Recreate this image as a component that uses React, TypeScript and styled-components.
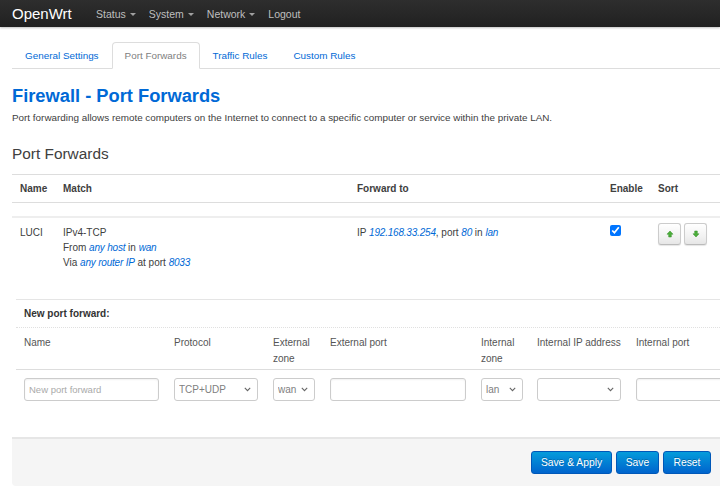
import React from "react";
import styled, { createGlobalStyle } from "styled-components";

const Global = createGlobalStyle`
  html, body { margin: 0; padding: 0; background: #fff; }
  body {
    font-family: "Liberation Sans", Arial, sans-serif;
    font-size: 10px;
    color: #404040;
    overflow: hidden;
    width: 720px;
    height: 497px;
  }
  * { box-sizing: border-box; }
`;

const Navbar = styled.div`
  height: 27px;
  background: linear-gradient(#2e2e2e, #262626 60%, #202020);
  box-shadow: 0 1px 2px rgba(0, 0, 0, 0.25);
  display: flex;
  align-items: center;
  padding-left: 12px;
`;

const Brand = styled.a`
  color: #fff;
  font-size: 15px;
  width: 84px;
  line-height: 27px;
`;

const Menu = styled.div`
  display: flex;
  align-items: center;
`;

const MenuItem = styled.a`
  color: #bfbfbf;
  font-size: 10.5px;
  margin-right: 13px;
  display: flex;
  align-items: center;
`;

const Caret = styled.span`
  display: inline-block;
  width: 0;
  height: 0;
  margin-left: 4px;
  margin-top: 1px;
  border-left: 3px solid transparent;
  border-right: 3px solid transparent;
  border-top: 3px solid #a0a0a0;
`;

const Main = styled.div`
  padding-left: 12px;
`;

const Tabs = styled.div`
  display: flex;
  margin-top: 15px;
  height: 27px;
  border-bottom: 1px solid #ddd;
`;

const Tab = styled.a<{ $active?: boolean }>`
  height: 27px;
  padding: 0 12px;
  display: flex;
  align-items: center;
  font-size: 9.9px;
  color: ${(p) => (p.$active ? "#808080" : "#0069d6")};
  background: ${(p) => (p.$active ? "#fff" : "transparent")};
  border: 1px solid ${(p) => (p.$active ? "#ddd" : "transparent")};
  border-bottom-color: ${(p) => (p.$active ? "#fff" : "transparent")};
  border-radius: 4px 4px 0 0;
`;

const Title = styled.h2`
  margin: 16px 0 0 0;
  font-size: 18.3px;
  line-height: 22px;
  font-weight: bold;
  color: #0069d6;
`;

const Desc = styled.p`
  margin: 4px 0 0 0;
  font-size: 9.9px;
  line-height: 14px;
  color: #404040;
`;

const SectionTitle = styled.h3`
  margin: 19px 0 0 0;
  font-size: 15.4px;
  font-weight: normal;
  line-height: 20px;
  color: #404040;
`;

const Table = styled.table`
  margin-top: 10px;
  width: 708px;
  border-collapse: collapse;
  table-layout: fixed;
`;

const Th = styled.th`
  text-align: left;
  font-weight: bold;
  font-size: 10px;
  height: 28px;
  padding: 0 0 0 8px;
  border-top: 1px solid #ddd;
  border-bottom: 1px solid #ddd;
  color: #404040;
`;

const SpacerCell = styled.td`
  height: 14px;
  border-bottom: 2px solid #eee;
`;

const Td = styled.td`
  vertical-align: top;
  padding: 7px 0 0 8px;
  height: 82px;
  font-size: 10px;
  line-height: 15px;
  color: #404040;
`;

const Link = styled.em`
  color: #0069d6;
  font-style: italic;
  letter-spacing: -0.2px;
`;

const Check = styled.input`
  margin: 0;
  width: 11px;
  height: 11px;
  accent-color: #0075ff;
`;

const SortGroup = styled.div`
  display: flex;
  gap: 3px;
  margin-top: -2px;
`;

const SortBtn = styled.button`
  width: 23px;
  height: 22px;
  padding: 0;
  border: 1px solid #ccc;
  border-bottom-color: #bbb;
  border-radius: 3px;
  background: linear-gradient(#fff, #f2f2f2 60%, #e6e6e6);
  box-shadow: 0 1px 1px rgba(0, 0, 0, 0.1);
  display: flex;
  align-items: center;
  justify-content: center;
`;

const NewSection = styled.div`
  margin-left: 4px;
  border-top: 1px solid #e5e5e5;
  width: 720px;
`;

const NewTitle = styled.div`
  height: 28px;
  padding-left: 8px;
  display: flex;
  align-items: center;
  font-weight: bold;
  font-size: 10px;
  color: #333;
  border-bottom: 1px dotted #e0e0e0;
`;

const Grid = styled.div<{ $header?: boolean }>`
  display: grid;
  grid-template-columns: 150px 99px 57px 151px 56px 99px 150px;
  padding-left: 8px;
  ${(p) =>
    p.$header
      ? `height: 42px; padding-top: 7px; border-bottom: 1px solid #ddd;`
      : `padding-top: 8px;`}
`;

const ColHead = styled.div`
  font-size: 10px;
  line-height: 16px;
  color: #555;
  padding-right: 8px;
`;

const TextInput = styled.input<{ $w: number }>`
  width: ${(p) => p.$w}px;
  height: 23px;
  border: 1px solid #ccc;
  border-radius: 3px;
  padding: 0 4px;
  font-family: "Liberation Sans", Arial, sans-serif;
  font-size: 9.5px;
  color: #555;
  box-shadow: inset 0 1px 2px rgba(0, 0, 0, 0.06);
  &::placeholder { color: #aaa; }
`;

const SelectWrap = styled.div<{ $w: number }>`
  position: relative;
  width: ${(p) => p.$w}px;
  height: 23px;
`;

const Select = styled.select`
  appearance: none;
  -webkit-appearance: none;
  width: 100%;
  height: 23px;
  border: 1px solid #ccc;
  border-radius: 3px;
  padding: 0 14px 0 4px;
  background: #fff;
  font-family: "Liberation Sans", Arial, sans-serif;
  font-size: 10px;
  color: #808080;
`;

const Chevron = styled.svg`
  position: absolute;
  right: 7px;
  top: 9px;
  pointer-events: none;
`;

const Footer = styled.div`
  margin-top: 36px;
  height: 49px;
  background: #f5f5f5;
  border-top: 2px solid #e6e6e6;
  border-radius: 0 0 0 4px;
  display: flex;
  justify-content: flex-end;
  align-items: flex-start;
  padding: 12px 9px 0 0;
  gap: 4px;
  width: 708px;
`;

const PrimaryBtn = styled.button<{ $w: number }>`
  width: ${(p) => p.$w}px;
  height: 23px;
  border: 1px solid #0058b8;
  border-radius: 3px;
  background: linear-gradient(#049cdb, #0064cd);
  color: #fff;
  font-family: "Liberation Sans", Arial, sans-serif;
  font-size: 10.3px;
  padding: 0;
  text-shadow: 0 -1px 0 rgba(0, 0, 0, 0.25);
`;

const ArrowUp = () => (
  <svg width="8" height="8" viewBox="0 0 8 8">
    <path d="M4 1 L7 4.2 H5.3 V7 H2.7 V4.2 H1 Z" fill="#4caf3a" stroke="#2f8a22" strokeWidth="0.5" />
  </svg>
);

const ArrowDown = () => (
  <svg width="8" height="8" viewBox="0 0 8 8">
    <path d="M4 7 L7 3.8 H5.3 V1 H2.7 V3.8 H1 Z" fill="#4caf3a" stroke="#2f8a22" strokeWidth="0.5" />
  </svg>
);

const Dropdown = ({ w, value }: { w: number; value: string }) => (
  <SelectWrap $w={w}>
    <Select defaultValue={value}>
      <option value={value}>{value}</option>
    </Select>
    <Chevron width="7" height="5" viewBox="0 0 7 5">
      <path d="M0.8 0.8 L3.5 3.6 L6.2 0.8" fill="none" stroke="#666" strokeWidth="1.1" />
    </Chevron>
  </SelectWrap>
);

export default function App() {
  return (
    <>
      <Global />
      <Navbar>
        <Brand>OpenWrt</Brand>
        <Menu>
          <MenuItem>Status<Caret /></MenuItem>
          <MenuItem>System<Caret /></MenuItem>
          <MenuItem>Network<Caret /></MenuItem>
          <MenuItem>Logout</MenuItem>
        </Menu>
      </Navbar>
      <Main>
        <Tabs>
          <Tab>General Settings</Tab>
          <Tab $active>Port Forwards</Tab>
          <Tab>Traffic Rules</Tab>
          <Tab>Custom Rules</Tab>
        </Tabs>
        <Title>Firewall - Port Forwards</Title>
        <Desc>
          Port forwarding allows remote computers on the Internet to connect to a specific computer or service within the private LAN.
        </Desc>
        <SectionTitle>Port Forwards</SectionTitle>
        <Table>
          <colgroup>
            <col style={{ width: 43 }} />
            <col style={{ width: 294 }} />
            <col style={{ width: 253 }} />
            <col style={{ width: 48 }} />
            <col style={{ width: 70 }} />
          </colgroup>
          <thead>
            <tr>
              <Th>Name</Th>
              <Th>Match</Th>
              <Th>Forward to</Th>
              <Th>Enable</Th>
              <Th>Sort</Th>
            </tr>
          </thead>
          <tbody>
            <tr>
              <SpacerCell colSpan={5} />
            </tr>
            <tr>
              <Td>LUCI</Td>
              <Td>
                IPv4-TCP
                <br />
                From <Link>any host</Link> in <Link>wan</Link>
                <br />
                Via <Link>any router IP</Link> at port <Link>8033</Link>
              </Td>
              <Td>
                IP <Link>192.168.33.254</Link>, port <Link>80</Link> in <Link>lan</Link>
              </Td>
              <Td>
                <Check type="checkbox" defaultChecked />
              </Td>
              <Td>
                <SortGroup>
                  <SortBtn><ArrowUp /></SortBtn>
                  <SortBtn><ArrowDown /></SortBtn>
                </SortGroup>
              </Td>
            </tr>
          </tbody>
        </Table>
        <NewSection>
          <NewTitle>New port forward:</NewTitle>
          <Grid $header>
            <ColHead>Name</ColHead>
            <ColHead>Protocol</ColHead>
            <ColHead>External zone</ColHead>
            <ColHead>External port</ColHead>
            <ColHead>Internal zone</ColHead>
            <ColHead>Internal IP address</ColHead>
            <ColHead>Internal port</ColHead>
          </Grid>
          <Grid>
            <div><TextInput $w={135} placeholder="New port forward" /></div>
            <div><Dropdown w={84} value="TCP+UDP" /></div>
            <div><Dropdown w={42} value="wan" /></div>
            <div><TextInput $w={136} /></div>
            <div><Dropdown w={42} value="lan" /></div>
            <div><Dropdown w={84} value="" /></div>
            <div><TextInput $w={136} /></div>
          </Grid>
        </NewSection>
        <Footer>
          <PrimaryBtn $w={81}>Save &amp; Apply</PrimaryBtn>
          <PrimaryBtn $w={43}>Save</PrimaryBtn>
          <PrimaryBtn $w={48}>Reset</PrimaryBtn>
        </Footer>
      </Main>
    </>
  );
}
